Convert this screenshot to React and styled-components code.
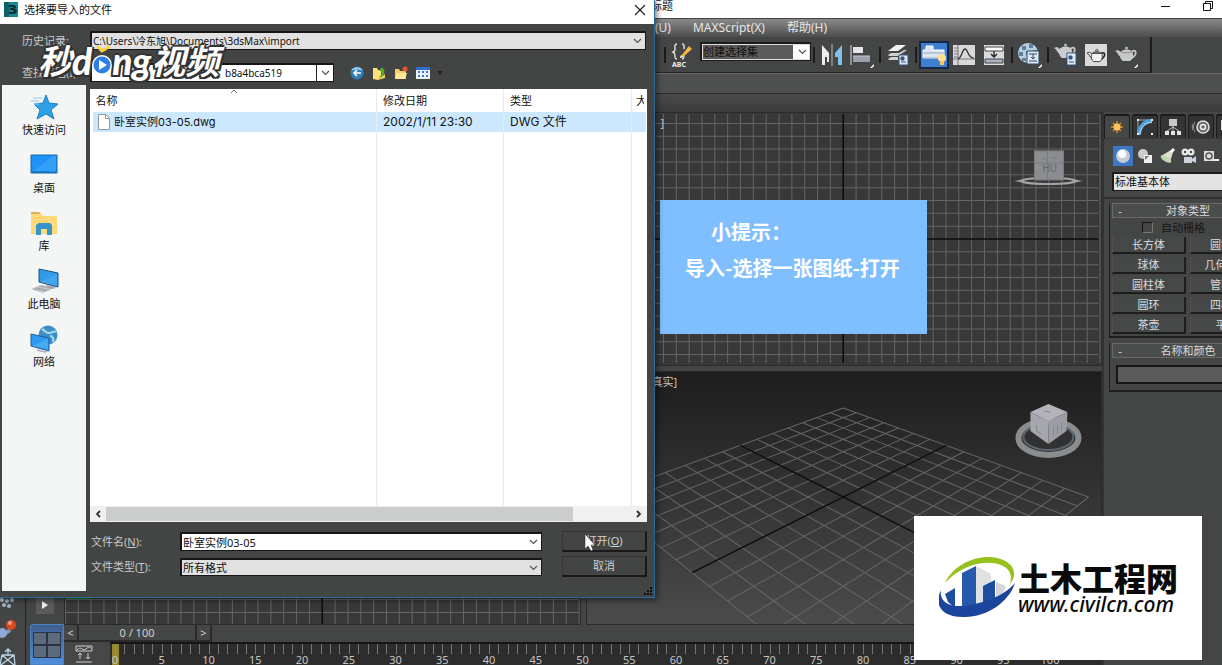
import React, { useState } from 'react';
import styled, { createGlobalStyle } from 'styled-components';

const GlobalStyle = createGlobalStyle`
  * { box-sizing: border-box; }
  body {
    margin: 0;
    background: #444645;
    font-family: 'Noto Sans', 'Noto Sans CJK SC', sans-serif;
    font-size: 11px;
    line-height: 16px;
  }
  button, input, select { font: inherit; margin: 0; border-radius: 0; }
  svg { display: block; flex-shrink: 0; }
`;

const Screen = styled.div`
  position: relative;
  display: flex;
  flex-direction: column;
  height: 100vh;
  overflow: hidden;
  background: #444645;
`;

/* ---------- main window ---------- */

const TitleBar = styled.header`
  display: flex;
  align-items: center;
  justify-content: space-between;
  height: 18px;
  padding: 0 9px 6px 651px;
  background: #fff;
  color: #111;
`;

const CaptionButtons = styled.div`
  display: flex;
  gap: 32px;
`;

const CaptionButton = styled.button`
  border: 0;
  padding: 0;
  background: none;
`;

const MenuBar = styled.nav`
  display: flex;
  align-items: center;
  gap: 22px;
  height: 19px;
  padding-left: 655px;
  border-top: 1px solid #444;
  background: linear-gradient(#8a8a8a, #4c4d4c);
`;

const MenuLink = styled.a`
  color: #e6e6e6;
  font-size: 12px;
  text-decoration: none;
`;

const ToolbarRow = styled.div`
  display: flex;
  height: 36px;
`;

const Toolbar = styled.div`
  display: flex;
  align-items: center;
  padding: 0 9px 0 662px;
  border-right: 2px solid #1c1c1c;
  border-bottom: 1px solid #242424;
`;

const ToolButton = styled.button`
  display: flex;
  align-items: center;
  justify-content: center;
  width: 30px;
  height: 28px;
  padding: 0;
  border: ${p => (p.$active ? '2px solid #15284a' : '0')};
  background: ${p => (p.$active ? '#3f7fd0' : 'none')};
`;

const Separator = styled.span`
  width: 6px;
  height: 16px;
  background: linear-gradient(#1b1b1b, #1b1b1b) center / 2px 100% no-repeat;
`;

const Band = styled.div`
  height: ${p => p.$height};
  border-top: 1px solid ${p => p.$edge};
  background: ${p => p.$fill};
`;

const Workspace = styled.div`
  display: flex;
  flex: 1;
  min-height: 0;
`;

const SideTools = styled.div`
  display: flex;
  flex-direction: column;
  justify-content: flex-end;
  width: 26px;
  border-right: 1px solid #222;
`;

const LayoutTabs = styled.div`
  display: flex;
  flex-direction: column;
  justify-content: flex-end;
  align-items: flex-end;
  gap: 10px;
  width: 38px;
`;

const ExpandButton = styled.button`
  display: flex;
  align-items: center;
  justify-content: center;
  width: 18px;
  height: 18px;
  margin-right: 10px;
  padding: 0;
  border: 0;
  background: #5a5b5a;
`;

const LayoutTab = styled.button`
  display: grid;
  place-items: center;
  width: 34px;
  height: 41px;
  padding: 0;
  border: 1px solid #4c82c4;
  border-radius: 3px 0 0 0;
  background: linear-gradient(#3f5f8f, #4f8fdf);
`;

const Center = styled.main`
  display: flex;
  flex-direction: column;
  flex: 1;
  min-width: 0;
`;

const Viewports = styled.div`
  display: grid;
  grid-template-columns: 1fr 1fr;
  grid-template-rows: 1fr 1fr;
  gap: 5px;
  flex: 1;
  min-height: 0;
`;

const Viewport = styled.section`
  position: relative;
  min-width: 0;
  min-height: 0;
  overflow: hidden;
  border: 1px solid #2b2b2b;
  background: ${p => (p.$shaded ? 'linear-gradient(#1d1d1d, #4a4b4a)' : '#383838')};

  > svg {
    width: 100%;
    height: 100%;
  }
`;

const ViewLabel = styled.span`
  position: absolute;
  top: 2px;
  left: ${p => p.$left};
  color: #c4c4c4;
`;

const TrackBar = styled.div`
  display: flex;
  height: 17px;
  color: #d0d0d0;
`;

const TrackButton = styled.button`
  width: ${p => (p.$wide ? '118px' : '15px')};
  padding: 0;
  border: 1px solid #2a2a2a;
  border-width: 0 2px 2px 0;
  background: #454746;
  color: inherit;
  line-height: 15px;
`;

const Timeline = styled.div`
  display: flex;
  height: 23px;
`;

const MiniCurve = styled.button`
  display: grid;
  place-items: center;
  width: 46px;
  padding: 0 6px 0 0;
  border: 0;
  background: #464847;
`;

const Ruler = styled.div`
  position: relative;
  display: flex;
  flex: 1;
  padding: 0 51px 0 5px;
  border-top: 2px solid #161616;
  background: #2d2d2d;
`;

const Mark = styled.div`
  display: flex;
  align-items: flex-end;
  flex: ${p => (p.$last ? '0 0 1px' : '1')};
  min-width: 0;
  color: #c6c6c6;
  background: repeating-linear-gradient(90deg, #777 0 1px, transparent 1px 20%) top / 100% 10px no-repeat;

  span {
    position: relative;
    flex: 0 0 30px;
    margin-left: -15px;
    line-height: 11px;
    text-align: center;
  }
`;

const FrameMarker = styled.i`
  position: absolute;
  top: 0;
  bottom: 0;
  left: 2px;
  width: 7px;
  background: #a8982c;
  opacity: 0.85;
`;

/* ---------- command panel ---------- */

const CommandPanel = styled.aside`
  display: flex;
  flex-direction: column;
  flex: 0 0 120px;
  overflow: hidden;
  border-left: 2px solid #333;
  color: #dcdcdc;

  > * {
    flex-shrink: 0;
    width: 162px;
  }
`;

const PanelTabs = styled.div`
  display: flex;
  gap: 2px;
  padding-top: 2px;
  border-bottom: 1px solid #3a3a3a;
`;

const PanelTab = styled.button`
  display: grid;
  place-items: center;
  width: 26px;
  height: 24px;
  padding: 0;
  border: 2px solid #1b1b1b;
  border-width: 2px 1px 0;
  border-radius: 3px 3px 0 0;
  background: ${p => (p.$active ? '#464847' : '#333433')};
`;

const Categories = styled.div`
  display: flex;
  gap: 2px;
  padding: 7px 0 6px 9px;
`;

const Category = styled.button`
  display: grid;
  place-items: center;
  width: 20px;
  height: 20px;
  padding: 0;
  border: 0;
  background: ${p => (p.$active ? '#3c76c4' : 'none')};
`;

const KindArea = styled.div`
  padding: 0 0 6px 8px;
  border-bottom: 2px solid #303130;
`;

const KindSelect = styled.select`
  appearance: none;
  display: block;
  width: 152px;
  height: 19px;
  padding: 0 1px;
  border: 2px solid #1c1c1c;
  border-width: 2px 1px 1px 2px;
  background: #e4e4e4;
  color: #111;
`;

const Rollout = styled.section`
  width: 158px;
  margin: 4px 0 0 5px;
  padding: 0 2px 2px;
  border: 1px solid #1f1f1f;
  border-width: 0 1px 2px;

  & + & {
    margin-top: 5px;
  }
`;

const RolloutHeader = styled.button`
  display: grid;
  grid-template-columns: 10px 1fr 10px;
  align-items: center;
  width: 100%;
  height: 15px;
  padding: 0 2px;
  border: 1px solid #686968;
  background: #4b4d4c;
  color: inherit;
  line-height: 13px;
`;

const AutoGrid = styled.label`
  display: flex;
  align-items: center;
  gap: 8px;
  height: 19px;
  padding-left: 30px;
  color: #161616;
`;

const GridCheck = styled.input`
  appearance: none;
  width: 11px;
  height: 11px;
  border: 1px solid #151515;
  border-right-color: #777;
  border-bottom-color: #777;
`;

const ObjectGrid = styled.div`
  display: grid;
  grid-template-columns: 1fr 1fr;
  gap: 3px 4px;
`;

const ObjectButton = styled.button`
  height: 17px;
  padding: 0;
  border: 1px solid #1d1d1d;
  border-width: 0 2px 2px 0;
  border-left: 1px solid #505150;
  background: #464847;
  color: inherit;
  line-height: 15px;
`;

const ColorField = styled.input`
  display: block;
  width: 140px;
  height: 19px;
  margin: 7px 4px 4px;
  border: 2px solid #161616;
  border-right: 0;
  background: #5a5b5a;
`;

/* ---------- file dialog ---------- */

const Dialog = styled.div`
  position: absolute;
  top: 0;
  left: 0;
  width: 655px;
  border: solid #2d6a9c;
  border-width: 0 1px 1px 0;
  background: #434544;
  box-shadow: 2px 2px 6px rgba(0, 0, 0, 0.5);
  color: #c9c9c9;
`;

const DialogTitle = styled.div`
  display: flex;
  align-items: center;
  gap: 6px;
  height: 24px;
  padding: 0 8px 5px 4px;
  background: #fff;
  color: #111;
`;

const DialogHeading = styled.h1`
  flex: 1;
  margin: 0;
  font-size: 11px;
  font-weight: 400;
`;

const Lookup = styled.div`
  display: flex;
  flex-direction: column;
  gap: 13px;
  padding: 7px 8px 3px 22px;
`;

const LookupRow = styled.div`
  display: flex;
  align-items: center;

  > label {
    width: 68px;
    white-space: nowrap;
  }
`;

const Combo = styled.div`
  display: grid;
  grid-template-columns: 1fr 16px;
  align-items: center;
  flex: ${p => p.$flex || '1'};
  height: ${p => p.$height || '19px'};
  border: 2px solid #161616;
  border-width: 2px 1px 1px 2px;
  background: ${p => (p.$grey ? '#e1e1e1' : '#fff')};
  color: #111;

  > svg {
    grid-area: 1 / 2;
    justify-self: center;
    pointer-events: none;
  }
`;

const comboField = `
  appearance: none;
  grid-area: 1 / 1 / 2 / 3;
  width: 100%;
  height: 100%;
  min-width: 0;
  border: 0;
  outline: 0;
  background: none;
  color: inherit;
`;

const ComboSelect = styled.select`
  ${comboField}
  padding: 0 18px 0 ${p => p.$indent || '1px'};
  font-size: ${p => (p.$small ? '10px' : '11px')};
`;

const ComboInput = styled.input`
  ${comboField}
  padding: 0 18px 0 1px;
`;

const FolderCombo = styled(Combo)`
  background: linear-gradient(#222, #222) right 16px top / 1px 100% no-repeat #fff;
`;

const NavButtons = styled.div`
  display: flex;
  align-items: center;
  gap: 6px;
  padding-left: 15px;
`;

const NavButton = styled.button`
  display: grid;
  place-items: center;
  width: 16px;
  height: 16px;
  padding: 0;
  border: 0;
  background: none;
`;

const DialogMain = styled.div`
  display: flex;
  gap: 4px;
  padding: 0 7px 6px 2px;
`;

const Places = styled.nav`
  display: flex;
  flex-direction: column;
  gap: 12px;
  width: 84px;
  padding-top: 7px;
  background: #f4f5f5;
`;

const Place = styled.a`
  display: flex;
  flex-direction: column;
  align-items: center;
  height: 46px;
  color: #111;
  text-decoration: none;
`;

const Files = styled.div`
  flex: 1;
  min-width: 0;
  padding-top: 4px;
`;

const FileTable = styled.table`
  width: 100%;
  height: 417px;
  table-layout: fixed;
  border-collapse: collapse;
  background: #fff;
  color: #111;

  th, td {
    padding: 0 0 0 6px;
    border-right: 1px solid #ebebeb;
    overflow: hidden;
    text-align: left;
    font-weight: 400;
    white-space: nowrap;
  }

  th:first-child {
    padding-left: 4px;
  }

  th:last-child, td:last-child {
    padding-left: 4px;
    border-right: 0;
  }
`;

const HeaderRow = styled.tr`
  height: 23px;
`;

const FileRow = styled.tr`
  height: 20px;
  background: #cce8ff;
  font-family: Inter, 'Noto Sans CJK SC', sans-serif;
  font-size: 12px;

  td:first-child {
    padding-left: 5px;
    border-left: 3px solid #fff;
    font-size: 11px;
  }
`;

const FileName = styled.span`
  display: flex;
  align-items: center;
  gap: 4px;
`;

const SortMark = styled.svg`
  position: absolute;
  top: 89px;
  left: 230px;
`;

const ScrollBar = styled.div`
  display: flex;
  align-items: center;
  height: 16px;
  background: #f0f0f0;
`;

const ScrollArrow = styled.button`
  display: grid;
  place-items: center;
  width: 16px;
  height: 16px;
  padding: 0;
  border: 0;
  background: none;
`;

const ScrollTrack = styled.div`
  flex: 1;
  height: 14px;
  background: linear-gradient(#cbcdcc, #cbcdcc) left / 89% 100% no-repeat;
`;

const DialogFooter = styled.form`
  display: grid;
  grid-template-columns: 90px 1fr 85px;
  align-items: center;
  row-gap: 4px;
  padding: 9px 0 14px;
`;

const FieldLabel = styled.label`
  padding-left: 1px;
`;

const ActionButton = styled.button`
  height: 21px;
  padding: 0;
  border: 1px solid #191919;
  border-width: 1px 2px 2px 1px;
  border-top-color: #343534;
  border-left-color: #343534;
  background: #434544;
  color: #cfcfcf;
`;

const ComboCell = styled.div`
  display: flex;
  margin-right: 20px;
`;

const Grip = styled.svg`
  position: absolute;
  right: 1px;
  bottom: 1px;
`;

const Cursor = styled.svg`
  position: absolute;
  top: 533px;
  left: 584px;
`;

/* ---------- overlays ---------- */

const VideoMark = styled.div`
  position: absolute;
  top: 39px;
  left: 38px;
  display: flex;
  align-items: center;
  height: 44px;
  color: #fff;
  font: italic 700 34px/44px Lato, 'Noto Sans CJK SC', sans-serif;
  text-shadow: 2px 0 #333, -2px 0 #333, 0 2px #333, 0 -2px #333, 1px 1px #333,
    -1px -1px #333, 2px 2px #333, -2px 2px #333;
  white-space: nowrap;

  b {
    font-size: 37px;
  }
`;

const Tip = styled.aside`
  position: absolute;
  top: 200px;
  left: 660px;
  width: 267px;
  padding: 14px 20px 48px 25px;
  background: #7fbfff;
  color: #fff;
  font: 700 20px/36px 'Noto Sans CJK SC', sans-serif;
  white-space: nowrap;

  p {
    margin: 0;
  }

  p:first-child {
    padding-left: 26px;
  }
`;

const SiteMark = styled.div`
  position: absolute;
  right: 20px;
  bottom: 5px;
  display: flex;
  align-items: center;
  gap: 1px;
  width: 288px;
  height: 144px;
  padding-left: 25px;
  background: #fff;
  color: #0a0a0a;
  white-space: nowrap;
`;

const SiteName = styled.strong`
  display: block;
  font-family: 'Noto Sans CJK SC', sans-serif;
  font-size: 32px;
  font-style: oblique 8deg;
  font-weight: 900;
  line-height: 32px;
`;

const SiteUrl = styled.span`
  display: block;
  font: italic 500 21px/22px 'Noto Sans', sans-serif;
`;

/* ---------- drawings ---------- */

const Chevron = () => (
  <svg width="9" height="6" viewBox="0 0 9 6">
    <path d="M1 1l3.5 3.5L8 1" fill="none" stroke="#555" strokeWidth="1.2" />
  </svg>
);

const range = (from, to) => Array.from({ length: to - from + 1 }, (_, i) => from + i);

const STEP = 12.83;

const FlatGrid = ({ cx, cy, width, height }) => (
  <g stroke="#656565" strokeWidth="1">
    {range(-21, 20).map(i => i !== 0 && (
      <path key={`v${i}`} d={`M${cx + i * STEP} 1V${height - 2}`} />
    ))}
    {range(-10, 10).map(i => i !== 0 && (
      <path key={`h${i}`} d={`M0 ${cy + i * STEP}H${width - 3}`} />
    ))}
    <path d={`M${cx} 1V${height - 2}M0 ${cy}H${width - 3}`} stroke="#0c0c0c" strokeWidth="1.6" />
  </g>
);

const project = (x, y) => {
  const w = 1 + 0.027 * (x + y);
  return `${256 + (17.5 * (x - y)) / w} ${-199 + 324 / w}`;
};

const FloorGrid = () => (
  <g fill="none" stroke="#656665" strokeWidth="1">
    {range(-7, 7).map(i => (
      <path
        key={i}
        d={`M${project(i, -7)}L${project(i, 7)}M${project(-7, i)}L${project(7, i)}`}
      />
    ))}
    <path
      d={`M${project(0, -7)}L${project(0, 7)}M${project(-7, 0)}L${project(7, 0)}`}
      stroke="#0c0c0c"
      strokeWidth="1.5"
    />
  </g>
);

const FrontCube = () => (
  <g>
    <ellipse cx="461" cy="68" rx="27" ry="3" fill="none" stroke="#a3a3a3" strokeWidth="2" />
    <path d="M427 68l10-2v4zM495 68l-10-2v4z" fill="#a3a3a3" />
    <rect x="447" y="38" width="29" height="29" fill="#8b8d91" stroke="#7b7d80" />
    <path d="M455 46h5M463 45h7M460 38v28M447 50h29" stroke="#6f7175" fill="none" opacity=".6" />
    <text x="455" y="59" fontSize="10" fill="#66686c">HU</text>
  </g>
);

const OrbitCube = () => (
  <g>
    <ellipse cx="461" cy="66" rx="30" ry="17" fill="#303130" stroke="#8b8c8e" strokeWidth="6" />
    <ellipse cx="461" cy="65" rx="25" ry="13" fill="none" stroke="#5d656e" strokeWidth="2" />
    <path d="M461 32l19 8-19 9-18-9z" fill="#b3b4b9" />
    <path d="M443 40l18 9v23l-18-13z" fill="#a6a7ad" />
    <path d="M480 40l-19 9v23l18-13z" fill="#9c9da4" />
    <path d="M457 39l6 1M449 53v6l5 3M466 55v8M470 53v8M474 51v8" stroke="#858790" fill="none" />
  </g>
);

const ScriptIcon = () => (
  <svg width="24" height="26" viewBox="0 0 24 26">
    <path d="M6 2C3 2 4 5 4 7s0 2-2 3c2 1 2 2 2 4s0 3 2 3M11 2c3 0 2 3 2 5M11 17c2 0 2-2 2-4" fill="none" stroke="#e5e5e5" strokeWidth="1.4" />
    <path d="M10 14l8-10 3 3-9 8-3 1z" fill="#f2b544" />
    <path d="M9 16l1-3 2 2z" fill="#fff" />
    <text x="1" y="25" fontSize="7" fontWeight="700" fill="#eee">ABC</text>
  </svg>
);

const MirrorIcon = () => (
  <svg width="24" height="24" viewBox="0 0 24 24">
    <path d="M2 2l7 8v9H7v-5H5v8H2z" fill="#ededed" />
    <path d="M12 1v22" stroke="#bbb" />
    <path d="M22 2l-7 8v4h3v8h4z" fill="#7fc1e8" />
  </svg>
);

const AlignIcon = () => (
  <svg width="26" height="26" viewBox="0 0 26 26">
    <path d="M2 3v20" stroke="#ddd" />
    <path d="M4 5h10v6H4z" fill="#e4e4ea" />
    <path d="M4 14h17v6H4z" fill="#9ba0ac" />
    <path d="M4 14h17" stroke="#c5c8d0" />
    <path d="M21 26l4-4v2l-2 2z" fill="#fff" />
  </svg>
);

const LayersIcon = () => (
  <svg width="24" height="24" viewBox="0 0 24 24">
    <path d="M2 8l8-6h10l-8 6z" fill="#f2f2f2" />
    <path d="M2 12l3-2h8l5-3h3l-9 6H3zM2 16l3-2h7v3H3z" fill="#cfcfcf" />
    <path d="M13 12h9v10h-9z" fill="#dfe9f5" stroke="#35577f" />
    <path d="M15 14h3v3h-3zM15 19h5" fill="#35577f" stroke="#35577f" />
  </svg>
);

const RibbonIcon = () => (
  <svg width="26" height="24" viewBox="0 0 26 24">
    <path d="M2 7h3V3h7v4h11v8H2z" fill="#dfe6f0" stroke="#fff" />
    <path d="M2 10h21M2 15h21" stroke="#8fa6c8" />
    <circle cx="21" cy="15" r="4" fill="#ffe08a" />
    <path d="M19 18h4v4h-4z" fill="#f1c65d" />
  </svg>
);

const CurveIcon = () => (
  <svg width="24" height="22" viewBox="0 0 24 22">
    <path d="M1 1h22v20H1z" fill="#d9d9d9" />
    <path d="M6 1v20M1 15h22M2 4h4M2 7h4M2 10h4M2 13h4" stroke="#777" />
    <path d="M6 15c4-1 4-10 7-10s3 10 9 9" fill="none" stroke="#333" strokeWidth="1.3" />
  </svg>
);

const SchematicIcon = () => (
  <svg width="22" height="22" viewBox="0 0 22 22">
    <path d="M1 1h20v20H1z" fill="#dcdcdc" />
    <path d="M2 3h18v4H2z" fill="#fff" stroke="#444" />
    <path d="M2 15h18v4H2z" fill="#a8b4bf" stroke="#444" />
    <path d="M11 7v6M8 10l3 3 3-3" fill="none" stroke="#222" strokeWidth="1.3" />
  </svg>
);

const MaterialIcon = () => (
  <svg width="26" height="26" viewBox="0 0 26 26">
    <circle cx="11" cy="11" r="10" fill="#b9cfe2" />
    <path d="M5 4h4v4H5zM12 2h4v4h-4zM2 10h4v4H2zM9 9h4v4H9zM16 8h4v4h-4zM5 16h4v3H5z" fill="#5f7f9f" />
    <path d="M10 9h12v13H10z" fill="#dfe8f2" stroke="#2e4865" />
    <path d="M12 12h8M12 19h8M16 12v5M14 15l2 2 2-2" stroke="#2e4865" fill="none" />
    <path d="M21 26l4-4v2l-2 2z" fill="#fff" />
  </svg>
);

const Teapot = ({ fill, line }) => (
  <g fill={fill} stroke={line} strokeWidth="1">
    <path d="M16 7c5-4 7 2 1 6" fill="none" stroke={line === 'none' ? fill : line} strokeWidth="1.8" />
    <path d="M6 12C3 11 3 7 0 6l3-1c2 1 3 3 4 3z" />
    <path d="M6 6h11c2 4 1 8-2 10H8C5 14 4 10 6 6z" />
    <path d="M7 6c1-2 8-2 9 0z" />
    <circle cx="11.5" cy="3" r="1.3" />
  </g>
);

const TeapotSetup = () => (
  <svg width="26" height="26" viewBox="0 0 26 26">
    <g transform="translate(1 0)"><Teapot fill="#c9cbce" line="none" /></g>
    <path d="M14 11h9v12h-9z" fill="#e2ebf5" stroke="#35577f" />
    <path d="M16 14h3v3h-3zM16 20h5" fill="#35577f" stroke="#35577f" />
  </svg>
);

const TeapotFrame = () => (
  <svg width="24" height="24" viewBox="0 0 24 24">
    <path d="M1 1h22v22H1z" fill="#dadada" />
    <g transform="translate(3 5) scale(.85)"><Teapot fill="#f2f2f2" line="#222" /></g>
  </svg>
);

const TeapotRender = () => (
  <svg width="26" height="26" viewBox="0 0 26 26">
    <g transform="translate(2 3)"><Teapot fill="#c7c8c9" line="none" /></g>
    <path d="M8 10c3 1 8 1 11 0" stroke="#8a8a8a" fill="none" />
    <path d="M21 26l4-4v2l-2 2z" fill="#fff" />
  </svg>
);

const SunIcon = () => (
  <svg width="16" height="16" viewBox="0 0 16 16">
    <path d="M8 2v12M2 8h12M4 4l8 8M12 4l-8 8" stroke="#d98d2b" strokeWidth="1.5" />
    <circle cx="8" cy="8" r="3.5" fill="#ffc45c" />
  </svg>
);

const ArcIcon = () => (
  <svg width="18" height="18" viewBox="0 0 18 18">
    <path d="M2 16V2h14" fill="none" stroke="#aaa" />
    <path d="M3 17C3 9 8 3 16 3" fill="none" stroke="#4fa3e0" strokeWidth="4" />
    <path d="M4 16C5 9 9 5 16 4" fill="none" stroke="#bfe2fa" />
    <path d="M1 1h2v2H1zM15 1h2v2h-2zM1 15h2v2H1zM15 15h2v2h-2z" fill="#eee" />
  </svg>
);

const HierarchyIcon = () => (
  <svg width="18" height="18" viewBox="0 0 18 18">
    <path d="M5 1h8v7H5z" fill="#c8cacc" />
    <path d="M9 8v5M9 9L3 13M9 9l6 4" stroke="#bbb" fill="none" />
    <path d="M1 13h4v4H1zM7 13h4v4H7zM13 13h4v4h-4z" fill="#e4e4e4" />
  </svg>
);

const MotionIcon = () => (
  <svg width="20" height="18" viewBox="0 0 20 18">
    <circle cx="12" cy="9" r="6" fill="#666" stroke="#ddd" strokeWidth="1.6" />
    <circle cx="12" cy="9" r="2.5" fill="none" stroke="#eee" strokeWidth="1.5" />
    <path d="M4 4c-2 3-2 7 0 10M2 6c-1 2-1 4 0 6" stroke="#999" fill="none" />
  </svg>
);

const DisplayIcon = () => (
  <svg width="18" height="16" viewBox="0 0 18 16">
    <path d="M1 1h16v10H1z" fill="#ddd" />
    <path d="M5 13h8v2H5z" fill="#aaa" />
  </svg>
);

const panelTabs = [SunIcon, ArcIcon, HierarchyIcon, MotionIcon, DisplayIcon];

const BallIcon = () => (
  <svg width="16" height="16" viewBox="0 0 16 16">
    <circle cx="8" cy="8" r="7" fill="#c3cad6" />
    <circle cx="7" cy="6" r="4" fill="#fff" />
  </svg>
);

const ShapesIcon = () => (
  <svg width="16" height="16" viewBox="0 0 16 16">
    <circle cx="6" cy="6" r="5" fill="#ccc" />
    <path d="M7 7h8v8H7z" fill="#f0f0f0" />
    <path d="M8 8h4l-4 4z" fill="#777" />
  </svg>
);

const LightIcon = () => (
  <svg width="16" height="16" viewBox="0 0 16 16">
    <path d="M2 8L12 2l2 2-3 10z" fill="#dedfcf" />
    <ellipse cx="7" cy="11" rx="6" ry="2.5" transform="rotate(30 7 11)" fill="#c3d6b4" />
    <path d="M11 3l3-3 2 2-3 3z" fill="#fff" />
  </svg>
);

const CameraIcon = () => (
  <svg width="18" height="16" viewBox="0 0 18 16">
    <circle cx="5" cy="4" r="3.5" fill="#e6e6e6" />
    <circle cx="11" cy="4" r="3.5" fill="#e6e6e6" />
    <path d="M4 3h2v2H4zM10 3h2v2h-2z" fill="#444" />
    <path d="M4 9h8v6H4zM12 11l4-3v7l-4-2z" fill="#cfd4da" />
  </svg>
);

const TapeIcon = () => (
  <svg width="16" height="16" viewBox="0 0 16 16">
    <path d="M1 3h10v10H1z" fill="#ddd" />
    <circle cx="6" cy="8" r="3" fill="none" stroke="#555" strokeWidth="1.5" />
    <path d="M11 12h5" stroke="#eee" strokeWidth="2" />
  </svg>
);

const categories = [BallIcon, ShapesIcon, LightIcon, CameraIcon, TapeIcon];

const StarIcon = () => (
  <svg width="30" height="30" viewBox="0 0 30 30">
    <path d="M17 3l3 8 9 1-7 6 3 9-8-5-9 5 3-9-6-6 9-1z" fill="#2fa0e8" stroke="#1c7fc4" />
    <path d="M4 6h9M2 9h8M5 12h5" stroke="#8cc7ee" />
  </svg>
);

const DesktopIcon = () => (
  <svg width="30" height="30" viewBox="0 0 30 30">
    <path d="M2 5h26v18H2z" fill="#1f93f5" stroke="#1469ac" />
    <path d="M3 22L24 6h3v16z" fill="#3fa6fa" opacity=".6" />
    <path d="M3 22h24" stroke="#0e5da0" strokeDasharray="18 1 2 1" />
  </svg>
);

const LibraryIcon = () => (
  <svg width="30" height="30" viewBox="0 0 30 30">
    <path d="M2 5h9l3 3h14v18H2z" fill="#ffd978" />
    <path d="M2 4h8l2 2H2z" fill="#d9b35a" />
    <path d="M7 17l3-2h11l2 2v10h-5v-6h-6v6H7z" fill="#3595c9" />
  </svg>
);

const ComputerIcon = () => (
  <svg width="30" height="30" viewBox="0 0 30 30">
    <path d="M10 3l19 4v14l-19-5z" fill="#2f9bea" stroke="#1f4f78" />
    <path d="M11 16L28 8v12z" fill="#55b4f4" opacity=".5" />
    <path d="M2 23l10-4 13 3-11 5z" fill="#c5c8cb" />
    <path d="M4 23l14 2M7 22l13 2M10 20l12 2" stroke="#93979b" strokeWidth=".7" />
    <path d="M16 19l8 1 3 2-5 1z" fill="#9fa6ad" />
  </svg>
);

const NetworkIcon = () => (
  <svg width="30" height="30" viewBox="0 0 30 30">
    <circle cx="19" cy="11" r="9.5" fill="#3f8fc4" />
    <path d="M13 5c4 2 3 4 7 4s5-3 7-1M21 12c3 0 4 3 3 6" stroke="#a9dcf2" strokeWidth="2" fill="none" />
    <path d="M2 10l18 4v13L2 22z" fill="#2c9af0" stroke="#1b5f9a" />
    <path d="M3 22L19 15v10z" fill="#5fb9f7" opacity=".5" />
    <path d="M8 26l8 2 2-1" stroke="#aab" strokeWidth="1.5" fill="none" />
  </svg>
);

const places = [
  ['快速访问', StarIcon],
  ['桌面', DesktopIcon],
  ['库', LibraryIcon],
  ['此电脑', ComputerIcon],
  ['网络', NetworkIcon],
];

const BackIcon = () => (
  <svg width="14" height="14" viewBox="0 0 14 14">
    <circle cx="7" cy="7" r="6.5" fill="#2c7fb8" />
    <path d="M1 5c2-5 10-5 12 0-3-2-9-2-12 0z" fill="#9fd0ee" />
    <path d="M11 7H4M7 4L4 7l3 3" stroke="#fff" strokeWidth="1.6" fill="none" />
  </svg>
);

const UpIcon = () => (
  <svg width="14" height="14" viewBox="0 0 14 14">
    <path d="M1 2h4l1 2h3v6l-3 4-5-1z" fill="#ffe07a" />
    <path d="M6 13l7-5v4l-7 2z" fill="#f3cf5c" />
    <path d="M7 11c2-1 3-3 2-6H7l3-4 3 4h-1c1 3-1 6-5 6z" fill="#4fae2a" />
  </svg>
);

const NewFolderIcon = () => (
  <svg width="14" height="14" viewBox="0 0 14 14">
    <path d="M1 3h4l1 2h6v8H1z" fill="#f6cf63" />
    <path d="M1 13l2-6h10l-2 6z" fill="#ffe596" />
    <circle cx="11" cy="3" r="2.5" fill="#e8552d" />
  </svg>
);

const ViewIcon = () => (
  <svg width="14" height="12" viewBox="0 0 14 12">
    <path d="M0 0h14v12H0z" fill="#e9f2fb" />
    <path d="M0 0h14v3H0z" fill="#2d6fc9" />
    <path d="M2 4h2v2H2zM6 4h2v2H6zM10 4h2v2h-2zM2 8h2v2H2zM6 8h2v2H6zM10 8h2v2h-2z" fill="#3b7cc9" />
  </svg>
);

const PageIcon = () => (
  <svg width="12" height="16" viewBox="0 0 12 16">
    <path d="M.5 .5h7l4 4v11H.5z" fill="#fff" stroke="#999" />
    <path d="M7.5 .5v4h4" fill="none" stroke="#999" />
  </svg>
);

const Emblem = () => (
  <svg width="78" height="64" viewBox="0 0 78 64">
    <path d="M6 27C16 4 50-6 68 6c10 7 8 16 3 22 2-7 1-14-7-18C48 2 22 9 6 27z" fill="#97c11f" />
    <path d="M6 38l10-6v20L9 46z" fill="#1d4ea0" />
    <path d="M23 17l14-7v44H23z" fill="#2459ab" />
    <path d="M37 10l15 8v10l-8 3v21l-7 2z" fill="#dfe1e3" />
    <path d="M44 30l12-6v24l-12 5z" fill="#1d4ea0" />
    <path d="M57 26l10 4-5 12-5 3z" fill="#d4d6d8" />
    <path d="M2 34c-2 11 7 17 22 16C42 48 64 41 76 27 70 46 48 61 26 61 4 62-6 50 2 34z" fill="#1b459c" />
  </svg>
);

const ToolBit = () => (
  <svg width="24" height="67" viewBox="0 0 24 67">
    <g fill="#9fb4ca">
      <circle cx="2" cy="2" r="2" /><circle cx="7" cy="3" r="2" /><circle cx="12" cy="2" r="2" />
      <circle cx="4" cy="7" r="2" /><circle cx="9" cy="8" r="2" />
    </g>
    <path d="M2 38l8-6" stroke="#8794ab" strokeWidth="4" />
    <circle cx="2" cy="35" r="5" fill="#8fa9d6" />
    <circle cx="11" cy="27" r="5" fill="#d84a25" />
    <circle cx="10" cy="25" r="2" fill="#f2a186" />
    <path d="M8 51v7M5 54l3-3 3 3M2 57h12l1 10M2 57L0 67M2 57l12 10M14 57L1 67" stroke="#b9d4e6" fill="none" strokeWidth="1.3" />
  </svg>
);

const objectTypes = [
  '长方体', '圆锥体', '球体', '几何球体', '圆柱体', '管状体', '圆环', '四棱锥', '茶壶', '平面',
];

const Command = () => (
  <CommandPanel>
    <PanelTabs>
      {panelTabs.map((Icon, i) => (
        <PanelTab key={i} $active={i === 0}><Icon /></PanelTab>
      ))}
    </PanelTabs>
    <Categories>
      {categories.map((Icon, i) => (
        <Category key={i} $active={i === 0}><Icon /></Category>
      ))}
    </Categories>
    <KindArea>
      <KindSelect aria-label="标准基本体">
        <option>标准基本体</option>
      </KindSelect>
    </KindArea>
    <Rollout>
      <RolloutHeader><span>-</span><span>对象类型</span></RolloutHeader>
      <AutoGrid><GridCheck type="checkbox" />自动栅格</AutoGrid>
      <ObjectGrid>
        {objectTypes.map(name => <ObjectButton key={name}>{name}</ObjectButton>)}
      </ObjectGrid>
    </Rollout>
    <Rollout>
      <RolloutHeader><span>-</span><span>名称和颜色</span></RolloutHeader>
      <ColorField type="text" aria-label="名称和颜色" />
    </Rollout>
  </CommandPanel>
);

const SetCombo = styled(Combo)`
  flex: 0 0 111px;
  margin: 0 0 7px 2px;
  border-color: #1b1b1b;
  background: linear-gradient(90deg, #5a5b5a 91px, #fff 91px);
  box-shadow: inset 0 0 0 1px #ddd;
`;

const MainToolbar = () => (
  <ToolbarRow>
    <Toolbar>
      <Separator />
      <ToolButton><ScriptIcon /></ToolButton>
      <SetCombo>
        <ComboSelect aria-label="创建选择集"><option>创建选择集</option></ComboSelect>
        <Chevron />
      </SetCombo>
      <Separator />
      <ToolButton><MirrorIcon /></ToolButton>
      <ToolButton><AlignIcon /></ToolButton>
      <Separator />
      <ToolButton><LayersIcon /></ToolButton>
      <Separator />
      <ToolButton $active><RibbonIcon /></ToolButton>
      <ToolButton><CurveIcon /></ToolButton>
      <ToolButton><SchematicIcon /></ToolButton>
      <Separator />
      <ToolButton><MaterialIcon /></ToolButton>
      <Separator />
      <ToolButton><TeapotSetup /></ToolButton>
      <ToolButton><TeapotFrame /></ToolButton>
      <ToolButton><TeapotRender /></ToolButton>
    </Toolbar>
  </ToolbarRow>
);

const ImportDialog = () => {
  const [fileName, setFileName] = useState('卧室实例03-05');

  return (
    <Dialog role="dialog" aria-labelledby="dialog-title">
      <DialogTitle>
        <svg width="14" height="15" viewBox="0 0 14 15">
          <path d="M0 0h14v15H0z" fill="#17898e" />
          <path d="M0 0h5v15H0z" fill="#0f5f68" />
          <path d="M5 3h4c4 0 4 4 1 4 4 0 4 5-1 5H5v-2h4c1 0 1-2-1-2H6V6h2c2 0 2-1 1-1H5z" fill="#0a3036" />
        </svg>
        <DialogHeading id="dialog-title">选择要导入的文件</DialogHeading>
        <CaptionButton aria-label="关闭">
          <svg width="12" height="12" viewBox="0 0 12 12">
            <path d="M1 1l10 10M11 1L1 11" stroke="#222" strokeWidth="1.2" />
          </svg>
        </CaptionButton>
      </DialogTitle>
      <Lookup>
        <LookupRow>
          <label htmlFor="history">历史记录:</label>
          <Combo $grey>
            <ComboSelect id="history" $small>
              <option>C:\Users\冷东旭\Documents\3dsMax\import</option>
            </ComboSelect>
            <Chevron />
          </Combo>
        </LookupRow>
        <LookupRow>
          <label htmlFor="folder">查找范围(I):</label>
          <FolderCombo $flex="0 0 244px">
            <ComboSelect id="folder" $indent="133px" $small><option>b8a4bca519</option></ComboSelect>
            <Chevron />
          </FolderCombo>
          <NavButtons>
            <NavButton><BackIcon /></NavButton>
            <NavButton><UpIcon /></NavButton>
            <NavButton><NewFolderIcon /></NavButton>
            <NavButton><ViewIcon /></NavButton>
            <svg width="6" height="4" viewBox="0 0 6 4"><path d="M0 0h6L3 4z" fill="#222" /></svg>
          </NavButtons>
        </LookupRow>
      </Lookup>
      <DialogMain>
        <Places>
          {places.map(([name, Icon]) => (
            <Place key={name} href="#"><Icon />{name}</Place>
          ))}
        </Places>
        <Files>
          <FileTable>
            <colgroup>
              <col />
              <col width="127" />
              <col width="128" />
              <col width="14" />
            </colgroup>
            <thead>
              <HeaderRow><th>名称</th><th>修改日期</th><th>类型</th><th>大</th></HeaderRow>
            </thead>
            <tbody>
              <FileRow>
                <td><FileName><PageIcon />卧室实例03-05.dwg</FileName></td>
                <td>2002/1/11 23:30</td>
                <td>DWG 文件</td>
                <td />
              </FileRow>
              <tr><td /><td /><td /><td /></tr>
            </tbody>
          </FileTable>
          <ScrollBar>
            <ScrollArrow aria-label="向左">
              <svg width="6" height="8" viewBox="0 0 6 8"><path d="M5 1L2 4l3 3" fill="none" stroke="#333" strokeWidth="1.8" /></svg>
            </ScrollArrow>
            <ScrollTrack />
            <ScrollArrow aria-label="向右">
              <svg width="6" height="8" viewBox="0 0 6 8"><path d="M1 1l3 3-3 3" fill="none" stroke="#333" strokeWidth="1.8" /></svg>
            </ScrollArrow>
          </ScrollBar>
          <DialogFooter onSubmit={e => e.preventDefault()}>
            <FieldLabel htmlFor="file-name">文件名(<u>N</u>):</FieldLabel>
            <ComboCell>
              <Combo>
                <ComboInput
                  id="file-name"
                  type="text"
                  value={fileName}
                  onChange={e => setFileName(e.target.value)}
                />
                <Chevron />
              </Combo>
            </ComboCell>
            <ActionButton type="submit">打开(<u>O</u>)</ActionButton>
            <FieldLabel htmlFor="file-type">文件类型(<u>T</u>):</FieldLabel>
            <ComboCell>
              <Combo $grey $height="18px">
                <ComboSelect id="file-type"><option>所有格式</option></ComboSelect>
                <Chevron />
              </Combo>
            </ComboCell>
            <ActionButton type="button">取消</ActionButton>
          </DialogFooter>
        </Files>
      </DialogMain>
      <SortMark width="8" height="5" viewBox="0 0 8 5">
        <path d="M1 4l3-3 3 3" fill="none" stroke="#777" />
      </SortMark>
      <Grip width="9" height="9" viewBox="0 0 9 9">
        <path d="M6 0h2v2H6zM3 3h2v2H3zM6 3h2v2H6zM0 6h2v2H0zM3 6h2v2H3zM6 6h2v2H6z" fill="#111" />
      </Grip>
      <Cursor width="12" height="19" viewBox="0 0 12 19">
        <path d="M1 1v15l3-3 3 5 2-1-2-5h4z" fill="#fff" stroke="#333" strokeWidth=".6" />
      </Cursor>
    </Dialog>
  );
};

const App = () => (
  <Screen>
    <GlobalStyle />
    <TitleBar>
      <span>标题</span>
      <CaptionButtons>
        <CaptionButton aria-label="最小化">
          <svg width="10" height="10" viewBox="0 0 10 10"><path d="M0 5.5h9" stroke="#111" /></svg>
        </CaptionButton>
        <CaptionButton aria-label="还原">
          <svg width="10" height="10" viewBox="0 0 10 10">
            <path d="M.5 2.5h7v7h-7zM2.5 2.5v-2h7v7h-2" fill="none" stroke="#111" />
          </svg>
        </CaptionButton>
      </CaptionButtons>
    </TitleBar>
    <MenuBar>
      <MenuLink href="#">(U)</MenuLink>
      <MenuLink href="#">MAXScript(X)</MenuLink>
      <MenuLink href="#">帮助(H)</MenuLink>
    </MenuBar>
    <MainToolbar />
    <Band $height="20px" $edge="#6a6b6a" $fill="#4f5150" />
    <Band $height="19px" $edge="#2c2c2c" $fill="linear-gradient(#494a49, #3b3b3b)" />
    <Workspace>
      <SideTools><ToolBit /></SideTools>
      <LayoutTabs>
        <ExpandButton aria-label="展开">
          <svg width="6" height="8" viewBox="0 0 6 8"><path d="M0 0l6 4-6 4z" fill="#eee" /></svg>
        </ExpandButton>
        <LayoutTab aria-label="视口布局">
          <svg width="28" height="26" viewBox="0 0 28 26">
            <path d="M0 0h28v26H0z" fill="#263447" />
            <path d="M1 1h12v11H1zM15 1h12v11H15zM1 14h12v11H1zM15 14h12v11H15z" fill="#5d6a7b" />
          </svg>
        </LayoutTab>
      </LayoutTabs>
      <Center>
        <Viewports>
          <Viewport />
          <Viewport>
            <svg viewBox="0 0 514 252" preserveAspectRatio="xMidYMid slice">
              <FlatGrid cx={256} cy={126} width={514} height={252} />
              <FrontCube />
            </svg>
            <ViewLabel $left="74px">]</ViewLabel>
          </Viewport>
          <Viewport>
            <svg viewBox="0 0 514 252" preserveAspectRatio="xMidYMid slice">
              <FlatGrid cx={257} cy={112} width={516} height={254} />
              <path d="M2 226h22" stroke="#1f7a2a" strokeWidth="2" />
            </svg>
          </Viewport>
          <Viewport $shaded>
            <svg viewBox="0 0 514 252" preserveAspectRatio="xMidYMid slice">
              <FloorGrid />
              <OrbitCube />
            </svg>
            <ViewLabel $left="65px">真实]</ViewLabel>
          </Viewport>
        </Viewports>
        <TrackBar>
          <TrackButton>&lt;</TrackButton>
          <TrackButton $wide>0 / 100</TrackButton>
          <TrackButton>&gt;</TrackButton>
        </TrackBar>
        <Timeline>
          <MiniCurve aria-label="曲线编辑器">
            <svg width="18" height="18" viewBox="0 0 18 18">
              <path d="M1 1h16v5H1z" fill="none" stroke="#ccc" />
              <path d="M2 5c4-5 6 2 9-1s3-1 5-1M5 14V8M3 10l2-2 2 2M13 8v6M11 12l2 2 2-2M1 17h16" fill="none" stroke="#ccc" />
            </svg>
          </MiniCurve>
          <Ruler>
            <FrameMarker />
            {range(0, 20).map(i => (
              <Mark key={i} $last={i === 20}><span>{i * 5}</span></Mark>
            ))}
          </Ruler>
        </Timeline>
      </Center>
      <Command />
    </Workspace>
    <Tip>
      <p>小提示：</p>
      <p>导入-选择一张图纸-打开</p>
    </Tip>
    <ImportDialog />
    <VideoMark>
      秒<b>d</b>
      <svg width="20" height="40" viewBox="0 0 20 40">
        <path d="M6 6l4 4 7-4" fill="none" stroke="#ffd23a" strokeWidth="3" strokeLinecap="round" />
        <circle cx="10" cy="24" r="10" fill="#fff" />
        <circle cx="10" cy="24" r="8.5" fill="#2f7fe6" />
        <path d="M7 19l8 5-8 5z" fill="#fff" />
      </svg>
      <b>ng</b>视频
    </VideoMark>
    <SiteMark>
      <Emblem />
      <div>
        <SiteName>土木工程网</SiteName>
        <SiteUrl>www.civilcn.com</SiteUrl>
      </div>
    </SiteMark>
  </Screen>
);

export default App;
